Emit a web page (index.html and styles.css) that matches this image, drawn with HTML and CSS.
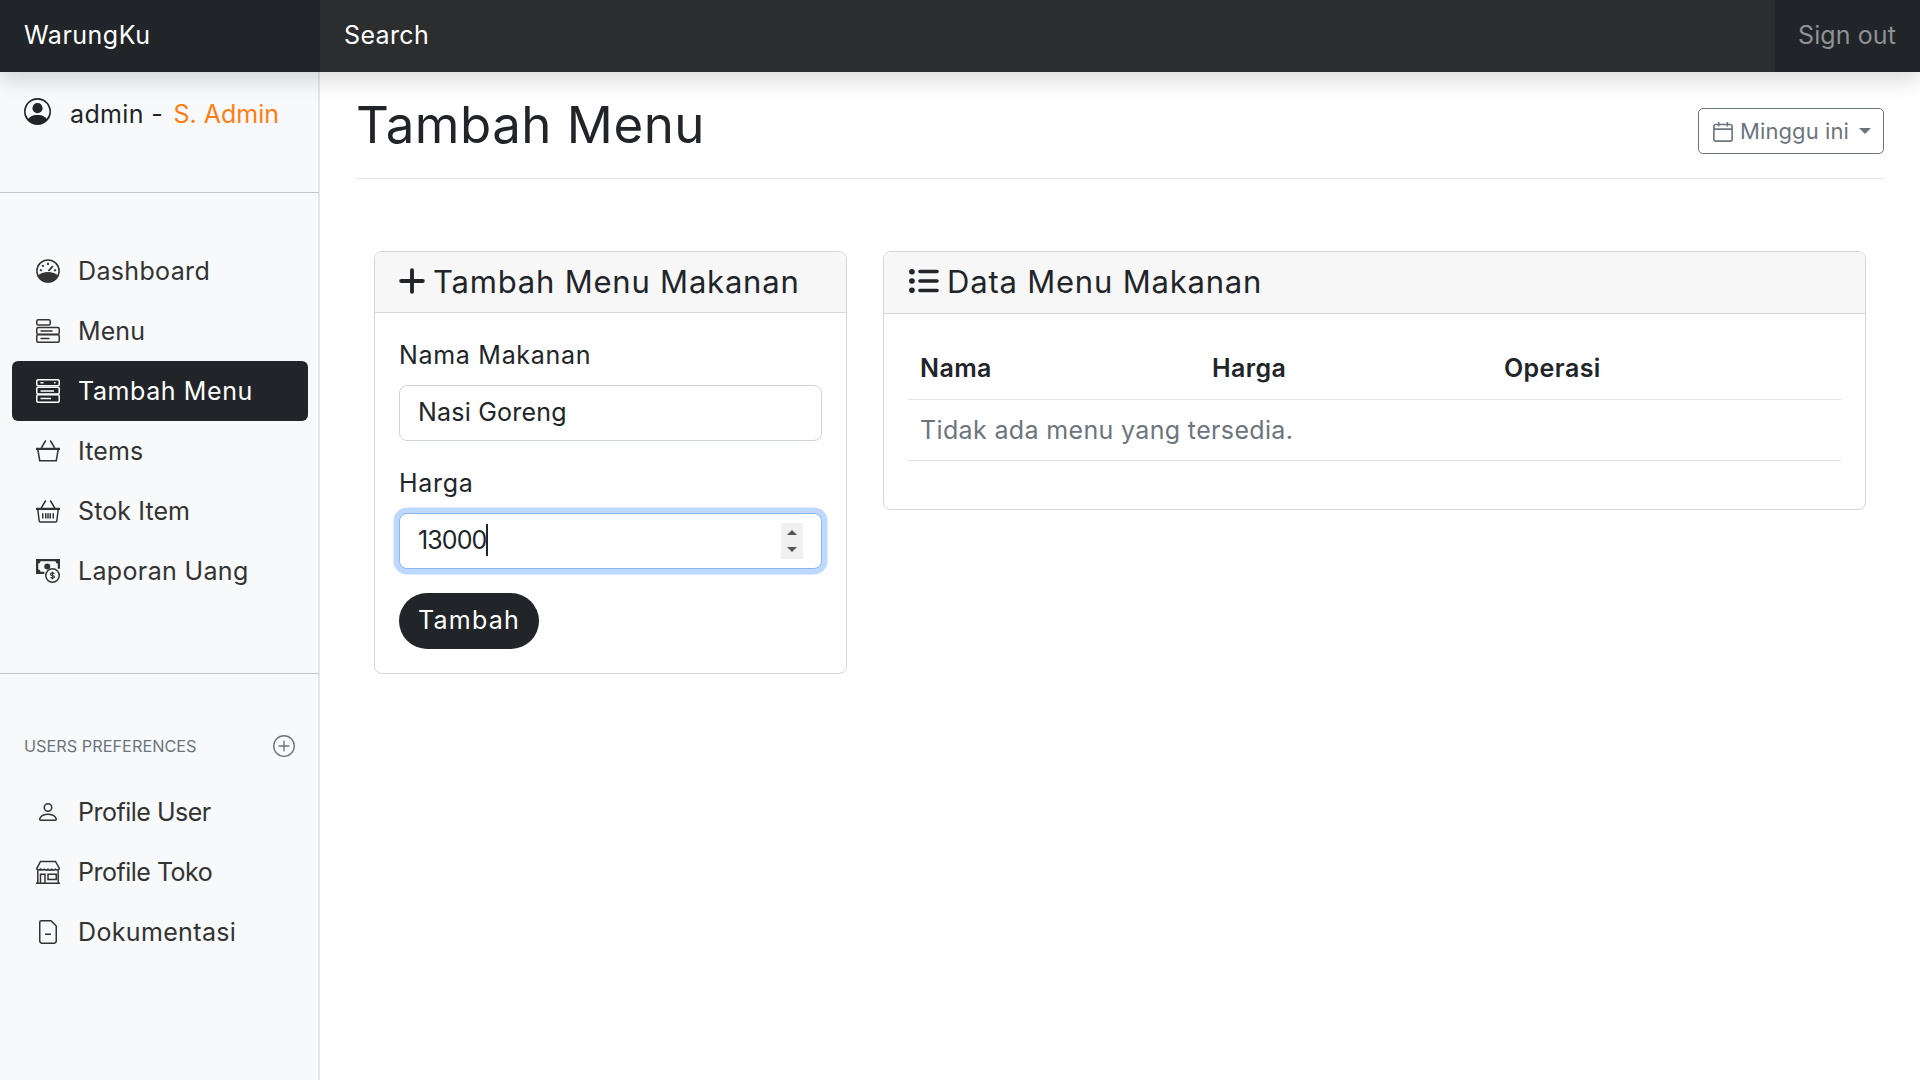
FILE: index.html
```html
<!DOCTYPE html>
<html lang="id">
<head>
  <meta charset="UTF-8">
  <title>Tambah Menu - WarungKu</title>
  <link rel="stylesheet" href="styles.css">
</head>
<body>
  <header class="topbar">
    <a class="brand" href="#">WarungKu</a>
    <div class="search">Search</div>
    <a class="signout" href="#">Sign out</a>
  </header>

  <div class="layout">
    <aside class="sidebar">
      <div class="user-box">
        <svg class="user-icon" viewBox="0 0 16 16" fill="currentColor"><path d="M11 6a3 3 0 1 1-6 0 3 3 0 0 1 6 0z"/><path fill-rule="evenodd" d="M0 8a8 8 0 1 1 16 0A8 8 0 0 1 0 8zm8-7a7 7 0 0 0-5.468 11.37C3.242 11.226 4.805 10 8 10s4.757 1.225 5.468 2.37A7 7 0 0 0 8 1z"/></svg>
        <span class="user-name">admin - <span class="role">S. Admin</span></span>
      </div>

      <nav class="nav nav-main">
        <a class="nav-link" href="#">
          <svg class="icon" viewBox="0 0 16 16" fill="none" stroke="currentColor"><circle cx="8" cy="8" r="7.400"/><path fill="currentColor" stroke="none" d="M1.200 11c1.600-1.600 4-2.400 6.800-2.400s5.200.8 6.800 2.400A7.500 7.500 0 0 1 8 15.500 7.500 7.500 0 0 1 1.200 11z"/><path stroke-width="1.200" d="M8 2.500v1.500M4.200 4l.8 1.200M2.600 7.200l1.300.5M13.400 7.200l-1.300.5M8.300 8l2.900-3.200"/></svg>
          Dashboard
        </a>
        <a class="nav-link tight" href="#">
          <svg class="icon" viewBox="0 0 16 16" fill="none" stroke="currentColor"><rect x=".5" y=".5" width="9" height="3.500" rx="1"/><rect x=".5" y="5.700" width="15" height="4.500" rx="1"/><rect x=".5" y="10.500" width="15" height="5" rx="1"/><path d="M3 8h8M3 13h6"/></svg>
          Menu
        </a>
        <a class="nav-link active" href="#">
          <svg class="icon" viewBox="0 0 16 16" fill="none" stroke="currentColor"><rect x=".5" y=".5" width="15" height="4" rx="1"/><rect x=".5" y="5.500" width="15" height="4.500" rx="1"/><rect x=".5" y="10.500" width="15" height="5" rx="1"/><path d="M3 2.500h2M12 2.500h1M3 8h9M3 13h7"/></svg>
          Tambah Menu
        </a>
        <a class="nav-link tight" href="#">
          <svg class="icon" viewBox="0 0 16 16" fill="none" stroke="currentColor"><path stroke-width="1.500" d="M0 6.600h16"/><path d="M1.200 7l1.300 7.500h11L14.800 7M3.500 6l3-5M12.500 6l-3-5"/></svg>
          Items
        </a>
        <a class="nav-link tight" href="#">
          <svg class="icon" viewBox="0 0 16 16" fill="none" stroke="currentColor"><path stroke-width="1.500" d="M0 6.600h16"/><path d="M1.200 7l.9 7.500a1 1 0 0 0 1 .9h9.800a1 1 0 0 0 1-.9L14.800 7M3.500 6l3-5M12.500 6l-3-5M4.500 9.500v3.500M6.500 9.500v3.500M8 9.500v3.500M9.500 9.500v3.500M11.500 9.500v3.500"/></svg>
          Stok Item
        </a>
        <a class="nav-link" href="#">
          <svg class="icon" viewBox="0 0 16 16" fill="none" stroke="currentColor"><path fill="currentColor" stroke="none" d="M0 0h16v6.500h-1.500V3a1.500 1.500 0 0 1-1.500-1.500H3A1.500 1.500 0 0 1 1.500 3v4A1.500 1.500 0 0 1 3 8.500h2.500V10H0z"/><circle cx="7.500" cy="5" r="2" fill="currentColor" stroke="none"/><circle cx="11" cy="11" r="4.500"/><path stroke-width=".8" d="M12.300 9.700c-.5-.5-2.600-.7-2.600.5s2.600.6 2.600 1.700-2.100 1-2.600.4M11 8.500v5"/></svg>
          Laporan Uang
        </a>
      </nav>

      <div class="side-heading">
        <span>USERS PREFERENCES</span>
        <svg class="heading-icon" viewBox="0 0 16 16" fill="currentColor"><path d="M8 15A7 7 0 1 1 8 1a7 7 0 0 1 0 14zm0 1A8 8 0 1 0 8 0a8 8 0 0 0 0 16z"/><path d="M8 4a.5.5 0 0 1 .5.5v3h3a.5.5 0 0 1 0 1h-3v3a.5.5 0 0 1-1 0v-3h-3a.5.5 0 0 1 0-1h3v-3A.5.5 0 0 1 8 4z"/></svg>
      </div>

      <nav class="nav">
        <a class="nav-link flat" href="#">
          <svg class="icon" viewBox="0 0 16 16" fill="currentColor"><path d="M8 8a3 3 0 1 0 0-6 3 3 0 0 0 0 6zm2-3a2 2 0 1 1-4 0 2 2 0 0 1 4 0zm4 8c0 1-1 1-1 1H3s-1 0-1-1 1-4 6-4 6 3 6 4zm-1-.004c-.001-.246-.154-.986-.832-1.664C11.516 10.680 10.289 10 8 10c-2.290 0-3.516.680-4.168 1.332-.678.678-.830 1.418-.832 1.664h10z"/></svg>
          Profile User
        </a>
        <a class="nav-link flat" href="#">
          <svg class="icon" viewBox="0 0 16 16" fill="none" stroke="currentColor"><path d="M3 1h10l2.500 4.500c0 1.600-2.500 1.600-2.500.2 0 1.400-2.500 1.400-2.500 0 0 1.400-2.500 1.400-2.500 0 0 1.400-2.500 1.400-2.500 0 0 1.400-2.500 1.400-2.500-.2 0 1.600-2.500 1.600-2.500.2z"/><path d="M1.200 7v8M14.800 7v8M0 15.500h16M3 15V9.500h3V15M8 9.500h5.500V13H8z"/></svg>
          Profile Toko
        </a>
        <a class="nav-link" href="#">
          <svg class="icon" viewBox="0 0 16 16" fill="none" stroke="currentColor"><path d="M3.500.5H10l3.500 3.500v10a1.500 1.500 0 0 1-1.500 1.500H4A1.500 1.500 0 0 1 2.500 14V1.500a1 1 0 0 1 1-1zM6 9.500h4"/></svg>
          Dokumentasi
        </a>
      </nav>
    </aside>

    <main class="content">
      <div class="page-head">
        <h1>Tambah Menu</h1>
        <button class="range-btn" type="button">
          <svg class="range-icon" viewBox="0 0 16 16" fill="none" stroke="currentColor" stroke-width="1.300"><rect x=".7" y="2" width="14.600" height="13.300" rx="1.500"/><path d="M.7 5.700h14.600M4.500 0v3.500M11.500 0v3.500"/></svg>
          <span class="range-text">Minggu ini</span>
          <span class="caret-down"></span>
        </button>
      </div>

      <div class="cards">
        <section class="card card-form">
          <div class="card-header">
            <svg class="head-icon plus" viewBox="0 0 24 24" fill="none" stroke="currentColor" stroke-width="3.600" stroke-linecap="round"><path d="M12 2v20M2 12h20"/></svg>
            Tambah Menu Makanan
          </div>
          <form class="card-body">
            <label for="nama">Nama Makanan</label>
            <input class="field" id="nama" type="text" value="Nasi Goreng">
            <label for="harga">Harga</label>
            <div class="field field-focus" id="harga">
              <span class="value">13000</span><span class="text-caret"></span>
              <span class="spinner"><i class="up"></i><i class="down"></i></span>
            </div>
            <button class="btn-add" type="button">Tambah</button>
          </form>
        </section>

        <section class="card card-table">
          <div class="card-header header-table">
            <svg class="head-icon list" viewBox="0 0 30 24" fill="none" stroke="currentColor" stroke-linecap="round"><path stroke-width="5.500" d="M2.800 2.800h.2M2.800 12h.2M2.800 21.200h.2"/><path stroke-width="3.600" d="M11 2.500h17M11 12h17M11 21.500h17"/></svg>
            Data Menu Makanan
          </div>
          <div class="card-body">
            <table>
              <thead>
                <tr><th class="col">Nama</th><th class="col">Harga</th><th>Operasi</th></tr>
              </thead>
              <tbody>
                <tr><td colspan="3">Tidak ada menu yang tersedia.</td></tr>
              </tbody>
            </table>
          </div>
        </section>
      </div>
    </main>
  </div>
</body>
</html>
```

FILE: styles.css
```css
* {
  box-sizing: border-box;
}
html, body {
  height: 100%;
}
body {
  margin: 0;
  display: flex;
  flex-direction: column;
  overflow: hidden;
  font-family: Inter, "Noto Sans", sans-serif;
  font-size: 25px;
  letter-spacing: .35px;
  color: #212529;
  background: #fff;
}
a {
  text-decoration: none;
}

.topbar {
  position: relative;
  z-index: 2;
  display: flex;
  flex: 0 0 72px;
  align-items: center;
  background: #2b2d2f;
  box-shadow: 0 8px 20px rgba(0, 0, 0, .15);
}
.brand {
  display: flex;
  align-items: center;
  width: 320px;
  height: 100%;
  padding: 0 0 2px 24px;
  background: #212529;
  color: #fff;
  letter-spacing: .5px;
}
.search {
  flex: 1;
  padding: 0 0 2px 24px;
  color: #fff;
}
.signout {
  display: flex;
  align-items: center;
  width: 145px;
  height: 100%;
  padding: 0 0 2px 23px;
  background: #212529;
  color: #8f9193;
  letter-spacing: .1px;
}

.layout {
  display: flex;
  flex: 1;
  min-height: 0;
}
.sidebar {
  flex: 0 0 320px;
  background: #f8f9fa;
  box-shadow: inset -2px 0 0 #e5e6e8;
}
.user-box {
  display: flex;
  align-items: center;
  gap: 19px;
  height: 121px;
  padding: 0 24px 40px;
  margin-right: 1px;
  border-bottom: 1px solid #c4c6c8;
}
.user-icon {
  width: 27px;
  height: 27px;
  margin-top: -1px;
}
.user-name {
  margin-top: 3px;
}
.role {
  margin-left: 3px;
  color: #fd7e14;
  letter-spacing: 0;
}
.nav {
  display: flex;
  flex-direction: column;
  padding: 0 12px;
}
.nav-main {
  padding-top: 48px;
  padding-bottom: 72px;
  margin-right: 1px;
  border-bottom: 1px solid #c4c6c8;
}
.nav-link {
  display: flex;
  align-items: center;
  gap: 18px;
  width: 296px;
  height: 60px;
  padding-left: 24px;
  margin-right: -1px;
  border-radius: 6px;
  color: #333;
}
.nav-link.active {
  background: #212529;
  color: #fff;
  letter-spacing: .6px;
}
.nav-link.tight {
  letter-spacing: .1px;
}
.nav-link.flat {
  letter-spacing: -.5px;
}
.icon {
  flex: none;
  width: 24px;
  height: 24px;
}
.side-heading {
  display: flex;
  align-items: center;
  justify-content: space-between;
  height: 108px;
  padding: 36px 25px 0 24px;
  font-size: 16.300px;
  letter-spacing: 0;
  color: #6c757d;
}
.heading-icon {
  width: 22px;
  height: 22px;
}

.content {
  flex: 1;
  padding: 0 36px;
}
.page-head {
  display: flex;
  align-items: flex-start;
  justify-content: space-between;
  height: 107px;
  border-bottom: 1px solid #e5e5ea;
}
h1 {
  margin: 22px 0 0;
  font-size: 51px;
  font-weight: 400;
  line-height: 62px;
  letter-spacing: .5px;
}
.range-btn {
  display: flex;
  align-items: center;
  gap: 7px;
  width: 186px;
  height: 46px;
  margin-top: 36px;
  padding: 0 14px;
  border: 1px solid #6c757d;
  border-radius: 5px;
  background: #fff;
  color: #6c757d;
  font: inherit;
  font-size: 22px;
  letter-spacing: .1px;
  white-space: nowrap;
}
.range-icon {
  flex: none;
  width: 20px;
  height: 20px;
  margin-top: 2px;
}
.caret-down {
  margin-left: 3px;
  border-top: 6px solid #6c757d;
  border-left: 6px solid transparent;
  border-right: 6px solid transparent;
}

.cards {
  display: flex;
  align-items: flex-start;
  gap: 36px;
  padding: 72px 18px 0;
}
.card {
  border: 1px solid #d6d6d6;
  border-radius: 8px;
  overflow: hidden;
}
.card-form {
  flex: 0 0 473px;
}
.card-table {
  flex: 1;
}
.card-header {
  display: flex;
  align-items: center;
  gap: 8px;
  height: 61px;
  padding: 0 24px 2px;
  border-bottom: 1px solid #d6d6d6;
  background: #f7f7f7;
  font-size: 31px;
  letter-spacing: .8px;
}
.header-table {
  height: 62px;
  padding: 0 25px 3px;
}
.head-icon.plus {
  width: 26px;
  height: 26px;
}
.head-icon.list {
  width: 30px;
  height: 26px;
}
.card-body {
  display: flex;
  flex-direction: column;
  padding: 24px;
}
label {
  display: block;
  height: 36px;
  line-height: 36px;
  margin-bottom: 12px;
  letter-spacing: .7px;
}
.field {
  display: flex;
  align-items: center;
  width: 100%;
  height: 56px;
  margin-bottom: 24px;
  padding: 0 18px 2px;
  border: 1px solid #ced4da;
  border-radius: 8px;
  background: #fff;
  color: #212529;
  font: inherit;
  letter-spacing: .2px;
}
.field-focus {
  position: relative;
  border-color: #86b7fe;
  box-shadow: 0 0 0 5.500px #bfd8fd;
}
.value {
  letter-spacing: -.9px;
}
.text-caret {
  width: 2px;
  height: 32px;
  background: #212529;
}
.spinner {
  position: absolute;
  top: 9px;
  right: 18px;
  display: flex;
  flex-direction: column;
  align-items: center;
  justify-content: center;
  gap: 12px;
  width: 22px;
  height: 36px;
  background: #f0f0f0;
}
.spinner i {
  border-left: 5px solid transparent;
  border-right: 5px solid transparent;
}
.spinner .up {
  border-bottom: 5px solid #555;
}
.spinner .down {
  border-top: 5px solid #555;
}
.btn-add {
  align-self: flex-start;
  width: 140px;
  height: 56px;
  padding: 0 0 2px;
  border: 0;
  border-radius: 28px;
  background: #212529;
  color: #fff;
  font: inherit;
  letter-spacing: 1.200px;
}

table {
  width: 100%;
  margin-bottom: 24px;
  border-collapse: collapse;
  table-layout: fixed;
}
th, td {
  height: 61px;
  padding: 0 12px;
  text-align: left;
  border-bottom: 1px solid #e3e4e5;
}
th {
  font-weight: 600;
  letter-spacing: .4px;
}
th.col {
  width: 292px;
}
td {
  color: #6c757d;
}
```
